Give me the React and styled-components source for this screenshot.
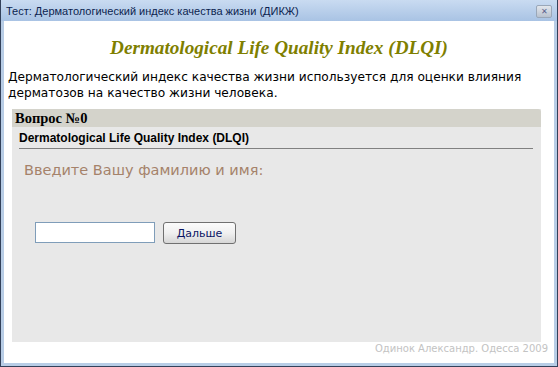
import React from 'react';
import styled, { createGlobalStyle } from 'styled-components';

const GlobalStyle = createGlobalStyle`
  html, body {
    margin: 0;
    padding: 0;
    background: #fff;
  }
  body {
    font-family: "Liberation Sans", Arial, sans-serif;
  }
`;

const Window = styled.div`
  width: 558px;
  height: 367px;
  box-sizing: border-box;
  display: flex;
  flex-direction: column;
  background: #b8cde6;
  border: 1px solid #33415a;
  border-top: none;
`;

const TitleBar = styled.div`
  height: 21px;
  flex: none;
  display: flex;
  align-items: center;
  justify-content: space-between;
  padding: 0 5px 0 5px;
  background: linear-gradient(#c9dbf1, #a9c3e4);
`;

const TitleText = styled.div`
  font-family: "Liberation Sans", Arial, sans-serif;
  font-size: 11px;
  color: #0c1f4f;
`;

const CloseButton = styled.div`
  width: 14px;
  height: 11px;
  margin-top: 2px;
  border: 1px solid #9aa7b8;
  border-radius: 2px;
  background: linear-gradient(#e2e6ec, #b9c2cf);
  color: #5a5f8c;
  font-size: 8px;
  line-height: 11px;
  text-align: center;
`;

const Body = styled.div`
  flex: 1;
  margin: 0 3px 3px 3px;
  background: #fff;
  display: flex;
  flex-direction: column;
`;

const Heading = styled.h1`
  margin: 16px 0 0 0;
  text-align: center;
  font-family: "Liberation Serif", "Times New Roman", serif;
  font-style: italic;
  font-weight: bold;
  font-size: 19.2px;
  color: #7f7f00;
  line-height: 22px;
`;

const Intro = styled.p`
  margin: 10px 0 0 4px;
  font-family: "DejaVu Sans", Verdana, sans-serif;
  font-size: 12.2px;
  line-height: 16px;
  color: #000;
`;

const Panel = styled.div`
  margin: 8px 13px 0 8px;
  height: 233px;
  background: #e8e8e8;
  display: flex;
  flex-direction: column;
`;

const PanelHeader = styled.div`
  height: 18px;
  background: #d4d3cb;
  border-top-right-radius: 3px;
  padding: 0 0 0 3px;
  font-family: "Liberation Serif", "Times New Roman", serif;
  font-weight: bold;
  font-size: 14.5px;
  line-height: 18px;
  color: #000;
`;

const PanelTitle = styled.div`
  margin: 5px 8px 0 7px;
  padding-bottom: 3px;
  border-bottom: 1px solid #808080;
  font-family: "Liberation Sans", Arial, sans-serif;
  font-weight: bold;
  font-size: 12px;
  line-height: 13px;
  color: #000;
`;

const Prompt = styled.div`
  margin: 12px 0 0 12px;
  font-family: "DejaVu Sans", Verdana, sans-serif;
  font-size: 14.5px;
  line-height: 18px;
  color: #a5826a;
`;

const FormRow = styled.div`
  display: flex;
  align-items: center;
  gap: 8px;
  margin: 41px 0 0 23px;
`;

const NameInput = styled.input`
  width: 120px;
  height: 21px;
  box-sizing: border-box;
  border: 1px solid #7f9db9;
  background: #fff;
  padding: 0 3px;
  outline: none;
`;

const NextButton = styled.button`
  width: 73px;
  height: 22px;
  margin-top: 2px;
  box-sizing: border-box;
  border: 1px solid #707070;
  border-radius: 3px;
  background: linear-gradient(#fbfbfb 0%, #f0f0f0 50%, #d6d6d6 100%);
  font-family: "DejaVu Sans", Verdana, sans-serif;
  font-size: 11px;
  color: #0a1464;
  padding: 0;
`;

const Footer = styled.div`
  margin: 1px 6px 0 0;
  text-align: right;
  font-family: "DejaVu Sans", Verdana, sans-serif;
  font-size: 10px;
  color: #c3c3c3;
`;

const App = () => (
  <>
    <GlobalStyle />
    <Window>
      <TitleBar>
        <TitleText>Тест: Дерматологический индекс качества жизни (ДИКЖ)</TitleText>
        <CloseButton>✕</CloseButton>
      </TitleBar>
      <Body>
        <Heading>Dermatological Life Quality Index (DLQI)</Heading>
        <Intro>
          Дерматологический индекс качества жизни используется для оценки влияния
          дерматозов на качество жизни человека.
        </Intro>
        <Panel>
          <PanelHeader>Вопрос №0</PanelHeader>
          <PanelTitle>Dermatological Life Quality Index (DLQI)</PanelTitle>
          <Prompt>Введите Вашу фамилию и имя:</Prompt>
          <FormRow>
            <NameInput type="text" />
            <NextButton>Дальше</NextButton>
          </FormRow>
        </Panel>
        <Footer>Одинок Александр. Одесса 2009</Footer>
      </Body>
    </Window>
  </>
);

export default App;
